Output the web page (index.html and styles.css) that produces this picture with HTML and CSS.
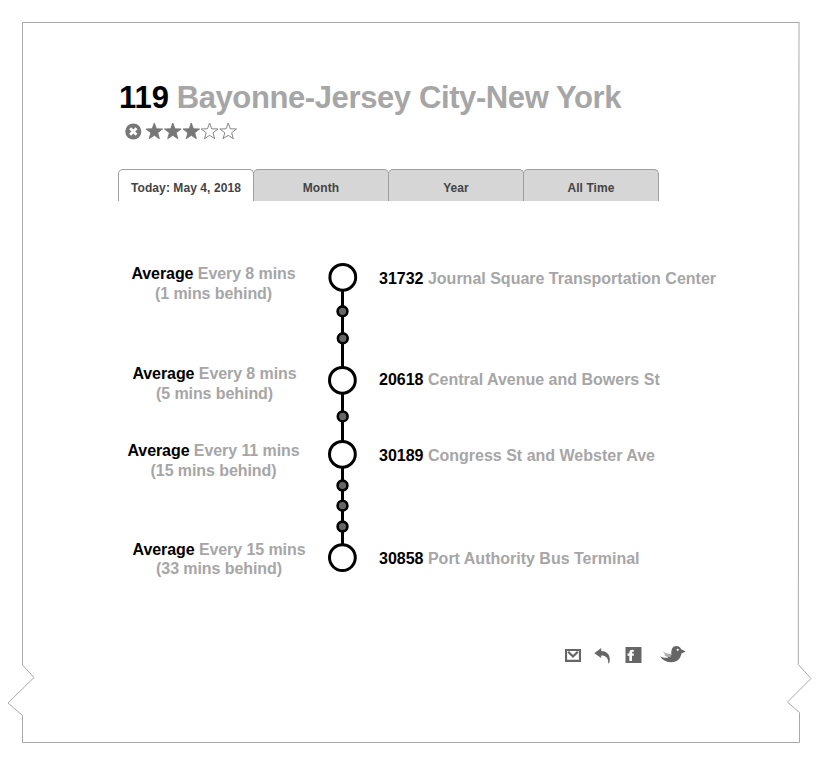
FILE: index.html
```html
<!DOCTYPE html>
<html lang="en">
<head>
<meta charset="utf-8">
<title>119 Bayonne-Jersey City-New York</title>
<link rel="stylesheet" href="styles.css">
</head>
<body>
<svg class="frame" width="827" height="765" viewBox="0 0 827 765" fill="none" stroke="#a9a9a9">
  <path d="M22.5 22.5H799.5M799 22.5L798.300 664.500L811 678.500L787.500 702L799.500 712.500V742.500H22.500V715.500L8 703L34 677.500L22.500 665V22.500"/>
</svg>
<main class="page">
  <h1 class="title"><span class="dark">119</span> <span class="name">Bayonne-Jersey City-New York</span></h1>
  <svg class="rating" width="120" height="20" viewBox="0 0 120 20">
    <defs><path id="star" d="M0-8.500L2.100-2.700L8.300-2.500L3.400 1.300L5.100 7.200L0 3.800L-5.100 7.200L-3.400 1.300L-8.300-2.500L-2.100-2.700Z"/></defs>
    <circle cx="15.300" cy="10.500" r="8" fill="#777"/>
    <path d="M12.100 7.300L18.500 13.700M18.500 7.300L12.100 13.700" stroke="#fff" stroke-width="2.800"/>
    <g fill="#777" stroke="#777" stroke-width=".9">
      <use href="#star" x="36.300" y="10.500"/><use href="#star" x="54.800" y="10.500"/><use href="#star" x="73.300" y="10.500"/>
    </g>
    <g fill="#fff" stroke="#777" stroke-width=".9">
      <use href="#star" x="91.600" y="10.500"/><use href="#star" x="110.200" y="10.500"/>
    </g>
  </svg>
  <nav class="tabs">
    <a class="tab active">Today: May 4, 2018</a><a class="tab">Month</a><a class="tab">Year</a><a class="tab">All Time</a>
  </nav>
  <section class="route">
    <div class="avg"><b>Average</b> Every 8 mins<br>(1 mins behind)</div>
    <svg class="rail" width="30" height="312" viewBox="0 0 30 312">
      <path d="M14.500 15V295" stroke="#000" stroke-width="3"/>
      <g fill="#fff" stroke="#000" stroke-width="3">
        <circle cx="14.800" cy="15.300" r="12.900"/><circle cx="14.400" cy="118.300" r="12.900"/><circle cx="14.400" cy="192.300" r="12.900"/><circle cx="14.400" cy="295.600" r="12.900"/>
      </g>
      <g fill="#666" stroke="#000" stroke-width="2.600">
        <circle cx="14.500" cy="49.300" r="4.900"/><circle cx="14.800" cy="76.300" r="4.900"/><circle cx="14.700" cy="154.400" r="4.900"/><circle cx="14.500" cy="223.500" r="4.900"/><circle cx="14.500" cy="243.700" r="4.900"/><circle cx="14.500" cy="264.500" r="4.900"/>
      </g>
    </svg>
    <div class="stop"><b>31732</b> Journal Square Transportation Center</div>
    <div class="avg second"><b>Average</b> Every 8 mins<br>(5 mins behind)</div>
    <div class="stop second"><b>20618</b> Central Avenue and Bowers St</div>
    <div class="avg"><b>Average</b> Every 11 mins<br>(15 mins behind)</div>
    <div class="stop"><b>30189</b> Congress St and Webster Ave</div>
    <div class="avg last"><b>Average</b> Every 15 mins<br>(33 mins behind)</div>
    <div class="stop last"><b>30858</b> Port Authority Bus Terminal</div>
  </section>
  <footer class="share">
    <svg width="16" height="20" viewBox="0 0 16 20" fill="none" stroke="#666"><path d="M1 5H15V15.800H1Z" stroke-width="2.200"/><path d="M3.200 6.800L8 11.500L12.800 6.800" stroke-width="2.300"/></svg>
    <svg width="17" height="20" viewBox="0 0 17 20" fill="#666"><path d="M.3 8.200L7.200 3V6C13 6 17.500 10.500 15.200 18.200H14.200C14.500 13 12 10.500 7.200 10.500V13Z"/></svg>
    <svg width="17" height="20" viewBox="0 0 17 20"><path d="M.5 2H16.500V18H.5Z" fill="#666"/><path d="M4.300 16V10.800H2.500V8.500H4.300C4.100 5.300 5.700 4.400 8.800 4.900V6.900C7.400 6.700 6.900 7.100 7 8.500H8.800V10.800H7V16Z" fill="#fff"/></svg>
    <svg width="26" height="20" viewBox="0 0 26 20" fill="#666"><path d="M0 11.200C3 12.600 5.600 13.200 8.300 12.500L7.500 10.700L11.400 9.700C11.200 8.200 11.200 6.800 11.500 5.300C12 2.500 13.800 1 16.500 1C18.500 1 20.300 2 21.200 4.300L25.700 6.500L21.500 8.600C20.500 13.500 17.500 17.300 11.500 17.300C6.500 17.300 2.500 15.200 0 11.200Z"/><path d="M3.300 6.500C5.500 8.500 8 8.900 11.500 8.900L10.500 12.200C7 12 4.700 11.200 4.300 9.500L5.500 9.300C4.200 8.700 3.500 7.700 3.300 6.500Z" fill="#aaa"/><circle cx="17.700" cy="4.800" r="1.100" fill="#fff"/></svg>
  </footer>
</main>
</body>
</html>
```
FILE: styles.css
```css
body { margin: 0; background: #fff; font-family: "Liberation Sans", Arial, sans-serif; font-weight: bold; }
.frame { position: absolute; top: 0; left: 0; }
.page { box-sizing: border-box; height: 765px; padding: 80px 100px 0 118px; display: flex; flex-direction: column; align-items: flex-start; }
.title { margin: 0; padding-left: 1px; height: 41px; line-height: 36px; font-size: 31px; white-space: nowrap; color: #a6a6a6; }
.name { letter-spacing: -0.39px; margin-left: -1px; }
.dark, b { color: #000; }
.rating { display: block; }
.tabs { display: flex; margin-top: 28px; }
.tab { box-sizing: border-box; width: 136px; height: 32px; margin-right: -1px; border: 1px solid #a0a0a0; border-bottom: 0; border-radius: 5px 5px 0 0; background: #d6d6d6; color: #444; font-size: 12px; line-height: 36px; text-align: center; letter-spacing: 0.08px; }
.tab.active { background: #fff; }
.route { display: grid; grid-template-columns: 191px 19px 51px 1fr; grid-template-rows: 100px 77px 99px 41px; margin-top: 63px; font-size: 16px; line-height: 20px; color: #a6a6a6; white-space: nowrap; }
.avg { grid-column: 1; text-align: center; letter-spacing: -0.08px; }
.avg.second { padding-left: 2px; }
.avg.last { padding-left: 11px; line-height: 19px; }
.rail { grid-column: 3; grid-row: 1 / 5; margin-top: -2px; }
.stop { grid-column: 4; padding-top: 5px; }
.stop.second { padding-top: 6px; }
.stop.last { padding-top: 9px; }
.share { display: flex; align-items: flex-start; margin: 64px 0 0 447px; }
.share svg:nth-child(2) { margin-left: 13px; }
.share svg:nth-child(3) { margin-left: 14px; }
.share svg:nth-child(4) { margin-left: 18px; }
```
